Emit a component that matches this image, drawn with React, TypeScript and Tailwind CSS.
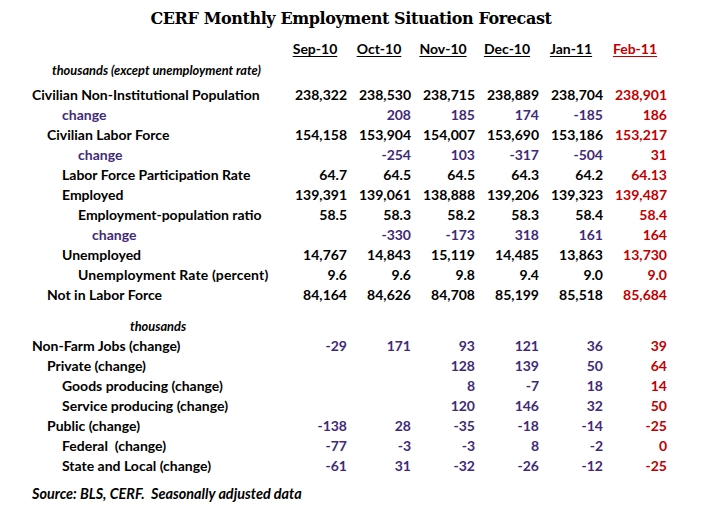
import React from 'react';

const PURPLE = 'text-[#3f2a78]';
const RED = 'text-[#c00000]';

type Row = {
  label: string;
  indent: string;
  values: string[];
  change?: boolean;
  extra?: string;
};

const topRows: Row[] = [
  { label: 'Civilian Non-Institutional Population', indent: 'pl-[32px]', values: ['238,322', '238,530', '238,715', '238,889', '238,704', '238,901'] },
  { label: 'change', indent: 'pl-[62px]', values: ['', '208', '185', '174', '-185', '186'], change: true },
  { label: 'Civilian Labor Force', indent: 'pl-[47px]', values: ['154,158', '153,904', '154,007', '153,690', '153,186', '153,217'] },
  { label: 'change', indent: 'pl-[78px]', values: ['', '-254', '103', '-317', '-504', '31'], change: true },
  { label: 'Labor Force Participation Rate', indent: 'pl-[62px]', values: ['64.7', '64.5', '64.5', '64.3', '64.2', '64.13'] },
  { label: 'Employed', indent: 'pl-[62px]', values: ['139,391', '139,061', '138,888', '139,206', '139,323', '139,487'] },
  { label: 'Employment-population ratio', indent: 'pl-[78px]', values: ['58.5', '58.3', '58.2', '58.3', '58.4', '58.4'] },
  { label: 'change', indent: 'pl-[92px]', values: ['', '-330', '-173', '318', '161', '164'], change: true },
  { label: 'Unemployed', indent: 'pl-[62px]', values: ['14,767', '14,843', '15,119', '14,485', '13,863', '13,730'] },
  { label: 'Unemployment Rate (percent)', indent: 'pl-[78px]', values: ['9.6', '9.6', '9.8', '9.4', '9.0', '9.0'], extra: 'tracking-[0.01em]' },
  { label: 'Not in Labor Force', indent: 'pl-[47px]', values: ['84,164', '84,626', '84,708', '85,199', '85,518', '85,684'] },
];

const jobRows: Row[] = [
  { label: 'Non-Farm Jobs (change)', indent: 'pl-[32px]', values: ['-29', '171', '93', '121', '36', '39'], change: true },
  { label: 'Private (change)', indent: 'pl-[47px]', values: ['', '', '128', '139', '50', '64'], change: true },
  { label: 'Goods producing (change)', indent: 'pl-[62px]', values: ['', '', '8', '-7', '18', '14'], change: true },
  { label: 'Service producing (change)', indent: 'pl-[62px]', values: ['', '', '120', '146', '32', '50'], change: true },
  { label: 'Public (change)', indent: 'pl-[47px]', values: ['-138', '28', '-35', '-18', '-14', '-25'], change: true },
  { label: 'Federal  (change)', indent: 'pl-[62px]', values: ['-77', '-3', '-3', '8', '-2', '0'], change: true },
  { label: 'State and Local (change)', indent: 'pl-[62px]', values: ['-61', '31', '-32', '-26', '-12', '-25'], change: true },
];

const months = ['Sep-10', 'Oct-10', 'Nov-10', 'Dec-10', 'Jan-11', 'Feb-11'];

const DataRow = ({ row }: { row: Row }) => (
  <div className="grid grid-cols-[283px_repeat(6,64px)] h-[20px] items-center">
    <div className={`${row.indent} ${row.label === 'change' ? PURPLE : 'text-black'} ${row.extra ?? ''} whitespace-pre`}>
      {row.label}
    </div>
    {row.values.map((v, i) => (
      <div key={i} className={`text-right ${i === 5 ? RED : row.change ? PURPLE : 'text-black'}`}>
        {v}
      </div>
    ))}
  </div>
);

export default function App() {
  return (
    <div className="w-[702px] h-[511px] bg-white font-['Lato',sans-serif] font-bold text-[14px] leading-none text-black">
      <div className="h-[38px] flex items-center justify-center font-['DejaVu_Serif',serif] text-[16px] font-bold tracking-[-0.025em]">
        CERF Monthly Employment Situation Forecast
      </div>

      {/* month headers */}
      <div className="grid grid-cols-[283px_repeat(6,64px)] h-[22px] items-center">
        <div />
        {months.map((m, i) => (
          <div key={m} className={`text-center underline underline-offset-2 ${i === 5 ? RED : ''}`}>{m}</div>
        ))}
      </div>

      <div className="h-[20px] flex items-center pl-[52px] italic text-[12.8px]">thousands (except unemployment rate)</div>
      <div className="h-[5px]" />

      {topRows.map((r, i) => <DataRow key={i} row={r} />)}

      <div className="h-[11px]" />
      <div className="h-[20px] flex items-center pl-[130px] italic text-[12.8px]">thousands</div>

      {jobRows.map((r, i) => <DataRow key={i} row={r} />)}

      <div className="h-[8px]" />
      <div className="h-[20px] flex items-center pl-[32px] italic text-[14.4px] whitespace-pre">Source: BLS, CERF.  Seasonally adjusted data</div>
    </div>
  );
}
